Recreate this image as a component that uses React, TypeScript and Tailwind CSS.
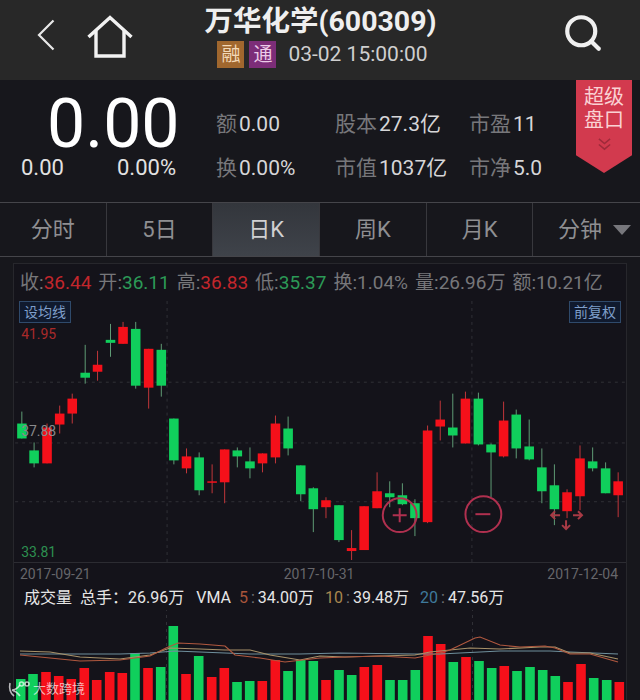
import { Search } from "lucide-react"

const GREEN = "#10cf5c"
const RED = "#f5101a"

// x, wickTop, bodyTop, bodyBottom, wickBottom, up
const candles: [number, number, number, number, number, boolean][] = [
  [20.7, 411, 423, 438, 438, false],
  [33, 442, 450, 463, 467, false],
  [46, 423, 427, 463, 463, true],
  [58.7, 405, 413, 424, 433, true],
  [71.3, 393, 398, 413, 423, true],
  [84.3, 344, 372, 377, 383, false],
  [96.7, 350, 364, 371, 380, true],
  [109.7, 323, 339, 342, 356, false],
  [122.3, 321, 326, 343, 343, true],
  [135, 321, 328, 385, 388, false],
  [148, 348, 348, 387, 408, true],
  [160.7, 343, 349, 385, 396, false],
  [173.3, 418, 418, 460, 464, false],
  [186, 448, 456, 468, 473, true],
  [198.7, 452, 457, 490, 495, false],
  [211.7, 464, 481, 482, 493, true],
  [224.3, 449, 449, 482, 503, true],
  [237, 447, 450, 456, 467, false],
  [249.7, 447, 461, 468, 478, false],
  [262.3, 453, 453, 463, 472, true],
  [275.3, 415, 423, 457, 463, true],
  [288, 416, 428, 448, 455, false],
  [300.7, 465, 465, 494, 501, false],
  [313.3, 487, 488, 509, 532, false],
  [326, 497, 500, 507, 518, true],
  [339, 505, 505, 540, 542, false],
  [351.7, 530, 548, 551, 560, true],
  [364.3, 506, 506, 550, 550, true],
  [377.3, 472, 491, 508, 508, true],
  [390, 481, 493, 497, 507, false],
  [402.7, 483, 495, 504, 505, false],
  [415.3, 499, 503, 518, 536, false],
  [428, 425, 430, 522, 523, true],
  [440.7, 400, 419, 426, 440, true],
  [453.3, 393, 427, 435, 447, false],
  [466, 391, 398, 443, 443, true],
  [479, 392, 398, 444, 445, false],
  [491.7, 443, 444, 452, 497, false],
  [504.3, 401, 420, 456, 457, true],
  [517, 409, 414, 448, 458, false],
  [530, 419, 446, 459, 460, false],
  [542.7, 448, 467, 491, 503, false],
  [555.3, 464, 485, 509, 525, false],
  [568, 489, 492, 511, 518, true],
  [581, 445, 458, 496, 510, true],
  [593.7, 447, 461, 468, 471, false],
  [606.7, 462, 468, 493, 493, false],
  [619.3, 472, 481, 495, 517, true],
]

const volumeTops = [
  679, 674, 672, 676, 679, 668, 680, 672, 673, 653, 668, 667, 626, 674, 656, 677, 668, 682, 681, 681, 660, 671, 660, 661,
  680, 670, 675, 667, 665, 680, 680, 670, 636, 644, 662, 657, 661, 668, 666, 671, 667, 670, 676, 682, 664, 678, 680, 682,
]
const volumeUp = [
  false, false, true, true, true, true, true, true, true, false, true, false, false, true, false, true, true, false, false, true, true, false, false, false,
  true, false, false, true, true, false, false, false, true, true, false, true, false, false, true, false, false, false, false, true, true, false, false, true,
]

const ma5 = "20,655 50,658 80,661 120,660 150,656 166,648 178,643 200,644 225,646 235,655 260,658 285,662 320,658 345,657 380,656 415,658 440,653 450,650 475,638 480,637 500,645 520,647 545,646 555,648 570,654 590,654 618,662"
const ma10 = "20,651 50,652 80,657 120,659 150,655 170,648 200,649 225,650 250,650 270,655 300,660 320,656 345,657 415,655 430,652 470,648 500,649 540,647 555,647 570,653 590,653 618,659"
const ma20 = "20,654 80,654 120,654 150,653 175,651 200,652 250,654 300,654 340,653 415,654 440,654 500,651 550,651 570,652 618,654"

const tabs = ["分时", "5日", "日K", "周K", "月K"]

function Stat({ label, value }: { label: string; value: string }) {
  return (
    <div className="flex items-center gap-[2px]">
      <span className="text-[#77777b]">{label}</span>
      <span className="text-[#d6d6d8]">{value}</span>
    </div>
  )
}

function Info({ label, value, color }: { label: string; value: string; color: string }) {
  return (
    <span className="whitespace-nowrap text-[#77777a]">
      {label}:<span className={color}>{value}</span>
    </span>
  )
}

function Tag({ label }: { label: string }) {
  return (
    <div className="flex h-[22px] w-[52px] items-center justify-center border border-[#2f4a6b] bg-[#101a2e] text-[14px] text-[#7f9fca]">
      {label}
    </div>
  )
}

function GridLines({ y }: { y: number[] }) {
  return (
    <g stroke="#303036" strokeWidth="1" strokeDasharray="3 4">
      {y.map((v) => (
        <line key={v} x1="14" x2="626" y1={v} y2={v} />
      ))}
      <line x1="166.5" x2="166.5" y1="300" y2="700" />
      <line x1="472.5" x2="472.5" y1="300" y2="700" />
    </g>
  )
}

function Sep() {
  return <span className="px-[3px] text-[#77777a]">:</span>
}

export default function App() {
  return (
    <div className="relative flex h-[700px] w-[640px] flex-col overflow-hidden bg-[#17171c] font-['Roboto','Noto_Sans_CJK_SC',sans-serif]">
      <header className="flex h-[80px] shrink-0 items-start bg-[#282828]">
        <div className="flex flex-1 items-start pl-[37px] pt-[15px]">
          <svg viewBox="0 0 18 32" className="mt-[4px] h-[32px] w-[18px]" fill="none" stroke="#e8e8e8" strokeWidth="2.2">
            <path d="M16.5 1.5 2 16l14.5 14.5" />
          </svg>
          <svg viewBox="0 0 46 43" className="ml-[32px] h-[43px] w-[46px]" fill="none" stroke="#f2f2f2" strokeWidth="3.4">
            <path d="M1.5 22 23 2.5 44.500 22" />
            <path d="M9 16v25h28V16" />
          </svg>
        </div>
        <div className="flex flex-col items-center pt-[5px]">
          <div className="text-[28.500px] font-bold leading-[34px] text-[#efefef]">万华化学(600309)</div>
          <div className="ml-[4px] flex items-center">
            <span className="flex h-[27px] w-[27px] items-center justify-center bg-[#a0672e] text-[19px] text-[#f3d9b8]">融</span>
            <span className="ml-[5px] flex h-[27px] w-[27px] items-center justify-center bg-[#7c2d78] text-[19px] text-[#eccbe8]">通</span>
            <span className="ml-[12px] text-[21px] text-[#cfcfcf]">03-02 15:00:00</span>
          </div>
        </div>
        <div className="flex flex-1 justify-end pr-[36px] pt-[12px]">
          <Search className="size-[42px] text-[#f0f0f0]" strokeWidth={2.4} />
        </div>
      </header>

      <section className="relative flex h-[122px] shrink-0 bg-[#17171c]">
        <div className="ml-[21px] w-[155px] pt-[13px]">
          <div className="pl-[26px] text-[68px] leading-[62px] text-white">0.00</div>
          <div className="flex justify-between text-[22px] leading-[26px] text-[#e2e2e2]">
            <span>0.00</span>
            <span>0.00%</span>
          </div>
        </div>
        <div className="ml-[40px] grid grid-cols-[119px_134px_auto] grid-rows-[44px_44px] pt-[23px] text-[21px]">
          <Stat label="额" value="0.00" />
          <Stat label="股本" value="27.3亿" />
          <Stat label="市盈" value="11" />
          <Stat label="换" value="0.00%" />
          <Stat label="市值" value="1037亿" />
          <Stat label="市净" value="5.0" />
        </div>
        <div className="absolute right-[8px] top-0 flex h-[93px] w-[56px] flex-col items-center bg-[#d23a4e] pt-[6px] text-[20px] leading-[23px] text-[#fad2d4] [clip-path:polygon(0_0,100%_0,100%_81%,50%_100%,0_81%)]">
          <span>超级</span>
          <span>盘口</span>
          <svg viewBox="0 0 16 16" className="mt-[5px] size-[15px]" fill="none" stroke="#9f2a3a" strokeWidth="1.6">
            <path d="m2 2 6 5 6-5M2 8l6 5 6-5" />
          </svg>
        </div>
      </section>

      <nav className="flex h-[55px] shrink-0 border-y border-[#45454a] text-[22px] text-[#8f8f92]">
        {tabs.map((t) => (
          <div
            key={t}
            className={`flex w-[106.700px] items-center justify-center border-r border-[#38383d] ${
              t === "日K" ? "bg-gradient-to-b from-[#33363c] to-[#3f434a] text-[#d0d0d2]" : ""
            }`}
          >
            {t}
          </div>
        ))}
        <div className="flex flex-1 items-center justify-end gap-[11px] pr-[9px]">
          分钟
          <span className="h-0 w-0 border-x-[9px] border-t-[10px] border-x-transparent border-t-[#77777c]" />
        </div>
      </nav>

      <section className="mx-[13px] mt-[6px] flex flex-1 flex-col overflow-hidden border-x border-t border-[#27272c] bg-[#14131a]">
        <div className="flex h-[37px] shrink-0 items-center gap-[7px] pl-[6px] pt-[2px] text-[19px]">
          <Info label="收" value="36.44" color="text-[#c2262c]" />
          <Info label="开" value="36.11" color="text-[#2c9a57]" />
          <Info label="高" value="36.83" color="text-[#c2262c]" />
          <Info label="低" value="35.37" color="text-[#2c9a57]" />
          <Info label="换" value="1.04%" color="text-[#77777a]" />
          <Info label="量" value="26.96万" color="text-[#77777a]" />
          <Info label="额" value="10.21亿" color="text-[#77777a]" />
        </div>

        <div className="relative h-[262px] shrink-0 border-b border-[#2c2c32]">
          <svg viewBox="14 300 612 262" className="block h-full w-full">
            <GridLines y={[381.5, 442.5, 501.5]} />
            <text x="20" y="338" fontSize="14" fill="#a92a2a">41.95</text>
            <text x="20" y="557" fontSize="14" fill="#2d8f50">33.81</text>
            {candles.map(([x, wt, bt, bb, wb, up]) => (
              <g key={x} fill={up ? RED : GREEN} stroke={up ? "#c2363a" : "#5f9c75"}>
                <line x1={x} x2={x} y1={wt} y2={wb} strokeWidth="1" />
                <rect x={Math.max(x - 4.8, 16)} y={bt} width={x - 4.8 < 16 ? x + 4.8 - 16 : 9.6} height={Math.max(bb - bt, 1.5)} stroke="none" />
              </g>
            ))}
            <text x="20" y="436" fontSize="14" fill="#8a8a8c">37.88</text>
            <g fill="none" stroke="#b0304f" strokeWidth="2">
              <circle cx="400" cy="515" r="17" />
              <path d="M393 515h14M400 508v14" />
              <circle cx="484" cy="514" r="18" />
              <path d="M476 514h15" />
            </g>
            <g fill="none" stroke="#a83a45" strokeWidth="2">
              <path d="M552 515h9M556 511l-4 4 4 4M574 515h9M579 511l4 4-4 4M567 520v9M563 525l4 4 4-4" />
            </g>
          </svg>
          <div className="absolute left-[5px] top-0 flex w-[602px] justify-between">
            <Tag label="设均线" />
            <Tag label="前复权" />
          </div>
        </div>

        <div className="flex h-[23px] shrink-0 items-center pl-[6px] pr-[8px] text-[14px] text-[#66666a]">
          <span>2017-09-21</span>
          <span className="ml-[193px]">2017-10-31</span>
          <span className="ml-auto">2017-12-04</span>
        </div>
        <div className="flex h-[24px] shrink-0 items-center whitespace-pre pl-[10px] text-[16px] text-[#e6e6e6]">
          <span>成交量</span>
          <span className="ml-[8px]">总手：26.96万</span>
          <span className="ml-[12px]">VMA</span>
          <span className="ml-[8px] text-[#a8553a]">5</span>
          <Sep />
          <span>34.00万</span>
          <span className="ml-[11px] text-[#a8874f]">10</span>
          <Sep />
          <span>39.48万</span>
          <span className="ml-[11px] text-[#3f7a9c]">20</span>
          <Sep />
          <span>47.56万</span>
        </div>

        <div className="relative min-h-0 flex-1">
          <svg viewBox="14 610 612 90" className="block h-[90px] w-full">
            <GridLines y={[]} />
            {candles.map(([x], i) => (
              <rect
                key={x}
                x={Math.max(x - 4.8, 16)}
                y={volumeTops[i]}
                width={x - 4.8 < 16 ? x + 4.8 - 16 : 9.6}
                height={700 - volumeTops[i]}
                fill={volumeUp[i] ? RED : GREEN}
              />
            ))}
            <polyline points={ma20} fill="none" stroke="#6f8f9c" strokeWidth="1.2" />
            <polyline points={ma10} fill="none" stroke="#a8926a" strokeWidth="1.2" />
            <polyline points={ma5} fill="none" stroke="#b0583f" strokeWidth="1.2" />
          </svg>
        </div>
      </section>

      <div className="absolute left-[7px] top-[679px] flex items-center gap-[2px] text-[13px] text-white/70">
        <svg viewBox="0 0 24 18" className="h-[18px] w-[24px]" fill="none" stroke="currentColor" strokeWidth="1.6">
          <path d="M3 3c-1 5 0 10 4 13M13 5c-3 4-6 5-8 5 3 1 6 3 8 6" />
          <circle cx="14.500" cy="4" r="2" />
          <circle cx="20" cy="4" r="2" />
        </svg>
        <span>大数跨境</span>
      </div>
    </div>
  )
}
